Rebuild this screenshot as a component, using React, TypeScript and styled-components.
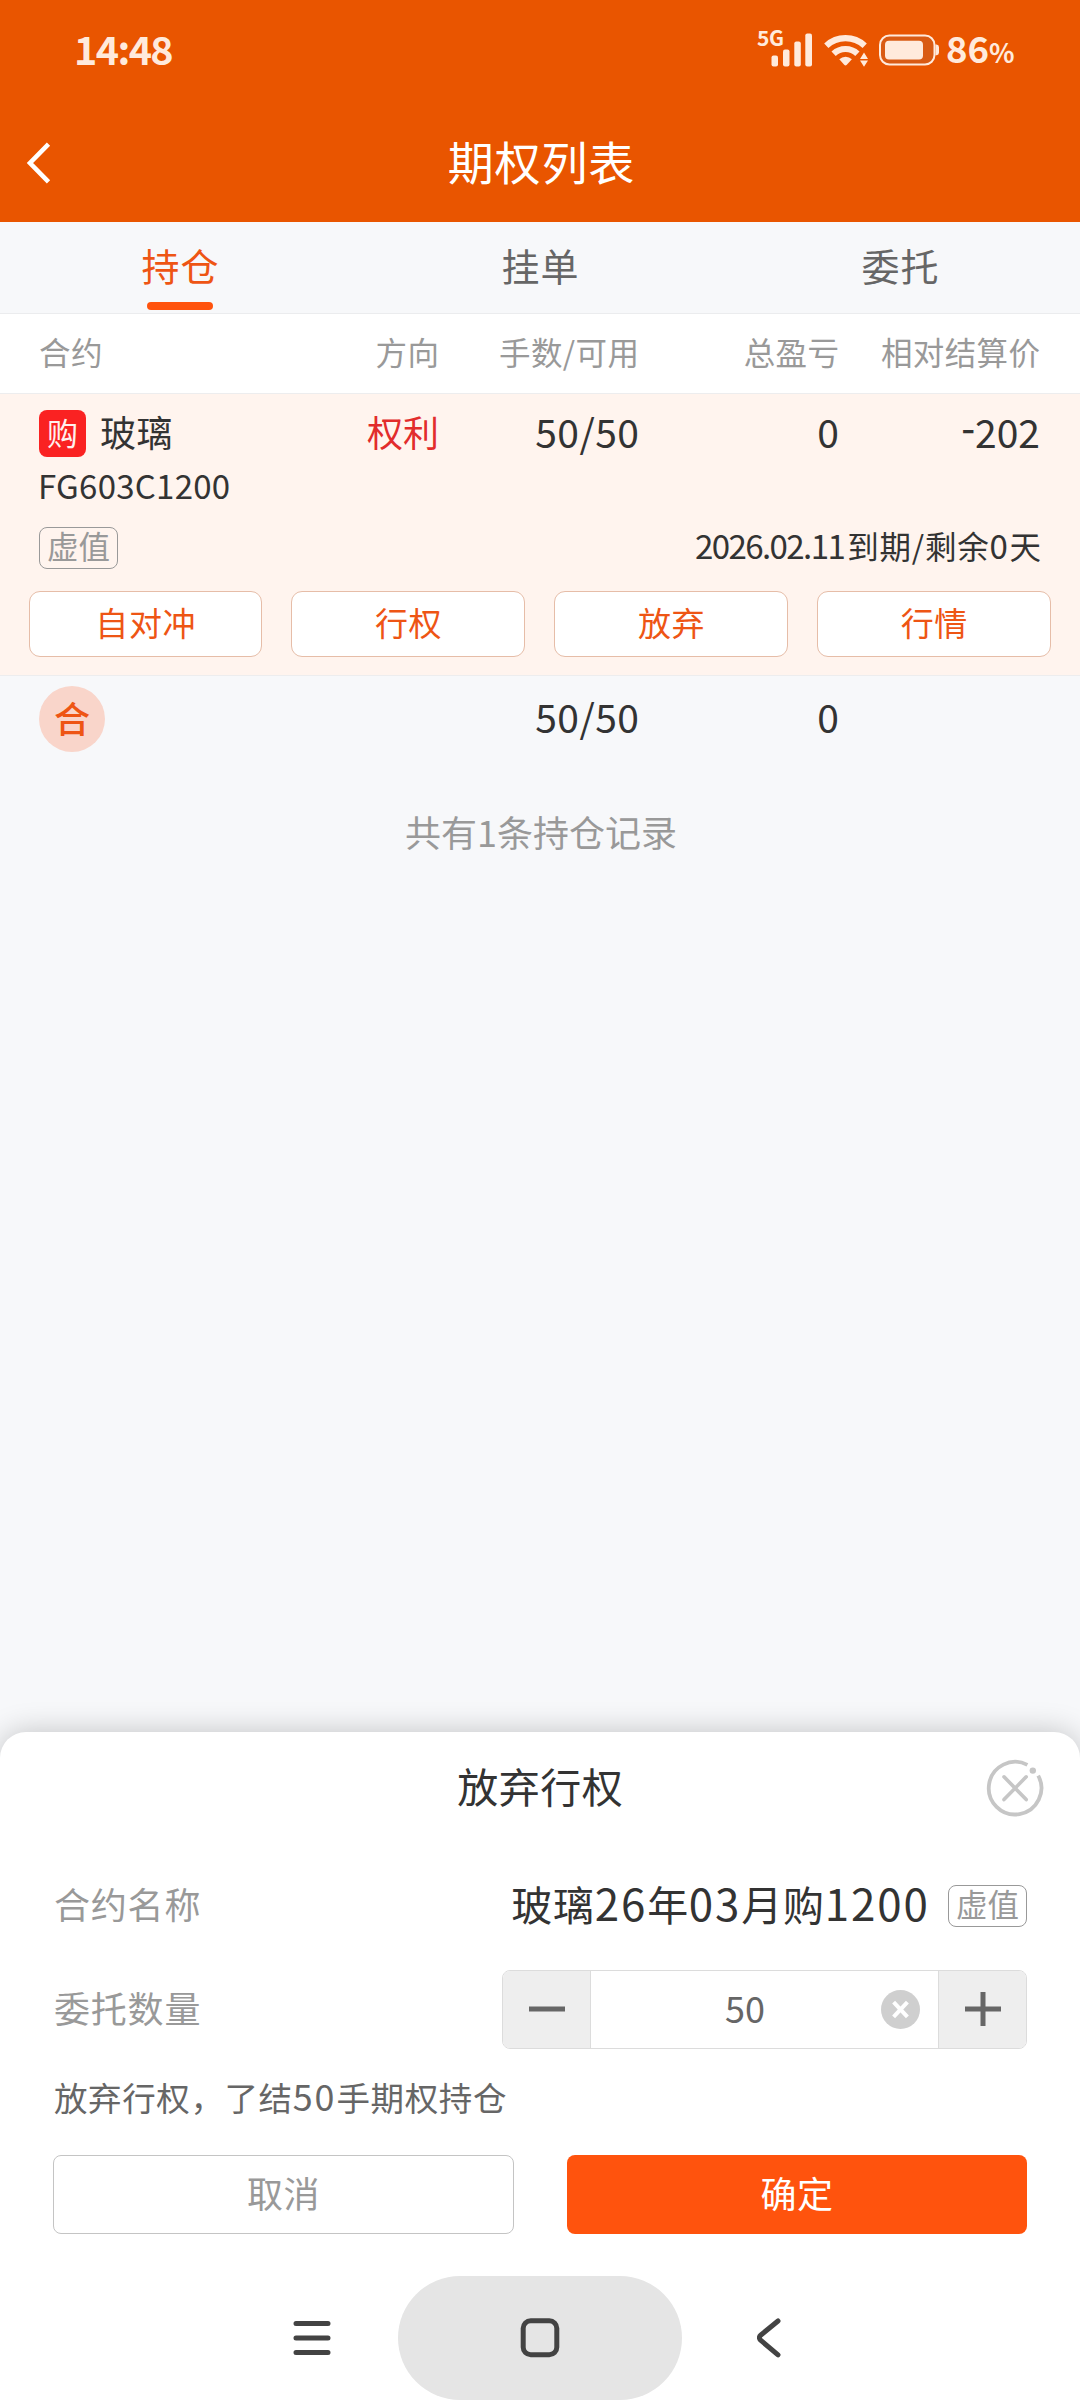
import React from "react";
import styled, { createGlobalStyle, css } from "styled-components";

const ORANGE = "#ff530d";
const ORANGE_TEXT = "#ee5514";
const STATUS = "#ffeadc";

const Global = createGlobalStyle`
  * { box-sizing: border-box; }
  html, body { margin: 0; padding: 0; }
  body {
    width: 1080px;
    background: #f7f8fa;
    font-family: "Noto Sans CJK SC", "Noto Sans", sans-serif;
  }
  button { font-family: inherit; padding: 0; margin: 0; border: 0; background: none; }
`;

const Screen = styled.div`
  width: 1080px;
  height: 2400px;
  display: flex;
  flex-direction: column;
  background: #f7f8fa;
  color: #333;
  overflow: hidden;
`;

/* Text with its line box trimmed to the em size; glyphs sit slightly low in this
   font, so the padding lifts them back to the optical middle. */
const Text = styled.span<{ $size: number; $color?: string; $weight?: number; $ls?: number }>`
  display: block;
  white-space: nowrap;
  font-size: ${(p) => p.$size}px;
  line-height: 1;
  padding-bottom: 0.12em;
  color: ${(p) => p.$color ?? "#333"};
  font-weight: ${(p) => p.$weight ?? 400};
  letter-spacing: ${(p) => p.$ls ?? 0}px;
  margin-right: ${(p) => -(p.$ls ?? 0)}px;
`;

const Num = styled.span<{ $scale?: number; $ls?: number }>`
  font-size: ${(p) => p.$scale ?? 1}em;
  line-height: 0;
  letter-spacing: ${(p) => p.$ls ?? 0}px;
`;

const Minus = styled.span`
  line-height: 0;
  vertical-align: 5px;
  font-weight: 500;
`;

const ExpiryDate = styled(Num)`
  margin-right: 3px;
`;

const Header = styled.header`
  height: 222px;
  flex: none;
  background: #e95500;
`;

const StatusBar = styled.div`
  height: 101px;
  padding: 0 67px 0 74px;
  display: flex;
  align-items: center;
  justify-content: space-between;
`;

const StatusRight = styled.div`
  width: 256px;
  display: flex;
  align-items: center;
`;

const StatusIcons = styled.svg`
  display: block;
  flex: none;
  margin-right: 7px;
  overflow: visible;
`;

const Battery = styled.div`
  display: flex;
  align-items: baseline;
`;

const TitleBar = styled.div`
  height: 121px;
  padding: 2px 25px 0 27px;
  display: grid;
  grid-template-columns: 100px 1fr 100px;
  align-items: center;
  justify-items: center;
`;

const BackIcon = styled.svg`
  justify-self: start;
  margin-left: -2px;
`;

const Tabs = styled.nav`
  height: 92px;
  flex: none;
  display: grid;
  grid-template-columns: repeat(3, 1fr);
  border-bottom: 1px solid #ebecee;
`;

const Tab = styled.div`
  display: flex;
  flex-direction: column;
  align-items: center;
  padding-top: 23.5px;
  gap: 13.9px;
`;

const TabBar = styled.i`
  width: 66px;
  height: 8px;
  border-radius: 4px;
  background: ${ORANGE};
`;

const columns = css`
  display: grid;
  grid-template-columns: 186px 214px 200px 200px 201px;
  padding: 0 40px 0 39px;
  align-items: center;
  justify-items: end;
  & > :first-child { justify-self: start; }
`;

const TableHead = styled.div`
  ${columns}
  height: 80px;
  flex: none;
  background: #fff;
  border-bottom: 1px solid #ededee;
`;

const Position = styled.section`
  flex: none;
  height: 282px;
  background: #fff4ee;
  border-bottom: 1px solid #ededee;
`;

const PositionRow = styled.div`
  ${columns}
  height: 79px;
`;

const Instrument = styled.div`
  display: flex;
  align-items: center;
  gap: 14px;
`;

const CallBadge = styled.div`
  width: 47px;
  height: 47px;
  border-radius: 8px;
  background: #fa2222;
  display: grid;
  place-items: center;
`;

const CodeLine = styled.div`
  height: 29px;
  padding-left: 38px;
  display: flex;
  align-items: center;
`;

const ExpiryLine = styled.div`
  height: 89px;
  padding: 3px 39px 0 39px;
  display: flex;
  align-items: center;
  justify-content: space-between;
`;

const Tag = styled.div`
  width: 79px;
  height: 42px;
  flex: none;
  border: 1px solid #999;
  border-radius: 8px;
  display: grid;
  place-items: center;
`;

const Actions = styled.div`
  display: grid;
  grid-template-columns: repeat(4, 1fr);
  gap: 29px;
  padding: 0 29px 0 28.5px;
`;

const ActionButton = styled.button`
  height: 66px;
  border: 1px solid #e6bda8;
  border-radius: 11px;
  background: #fff;
  display: grid;
  place-items: center;
`;

const TotalRow = styled.div`
  ${columns}
  height: 86px;
  flex: none;
`;

const SumBadge = styled.div`
  width: 66px;
  height: 66px;
  border-radius: 50%;
  background: #f9d5ca;
  display: grid;
  place-items: center;
`;

const Count = styled.div`
  flex: 1;
  padding: 51px 0 0 2px;
  display: flex;
  justify-content: center;
  align-items: flex-start;
`;

const Sheet = styled.section`
  flex: none;
  height: 544px;
  background: #fff;
  border-radius: 26px 26px 0 0;
  box-shadow: 0 0 30px rgba(0, 0, 0, 0.22);
  padding: 0 53px;
`;

const SheetHead = styled.div`
  height: 112px;
  margin: 0 -18px;
  display: grid;
  grid-template-columns: 60px 1fr 60px;
  align-items: center;
  justify-items: center;
`;

const Field = styled.div<{ $h: number }>`
  height: ${(p) => p.$h}px;
  padding-left: 1px;
  display: flex;
  align-items: center;
  justify-content: space-between;
`;

const ContractName = styled.div`
  display: flex;
  align-items: center;
  gap: 19px;
`;

const Stepper = styled.div`
  width: 525px;
  height: 79px;
  border: 1px solid #dcdcdc;
  border-radius: 8px;
  overflow: hidden;
  display: grid;
  grid-template-columns: 87px 1fr 87px;
`;

const StepButton = styled.button`
  background: #eee;
  display: grid;
  place-items: center;
`;

const StepValue = styled.div`
  border-left: 1px solid #dcdcdc;
  border-right: 1px solid #dcdcdc;
  padding: 0 18px;
  display: grid;
  grid-template-columns: 1fr 39px;
  align-items: center;
  justify-items: center;
`;

const Note = styled.div`
  height: 76px;
  padding: 20px 0 0 1px;
  display: flex;
  align-items: center;
`;

const SheetActions = styled.div`
  padding-top: 28px;
  display: grid;
  grid-template-columns: 1fr 1fr;
  gap: 53px;
`;

const SheetButton = styled.button<{ $primary?: boolean }>`
  height: 79px;
  border-radius: 8px;
  border: ${(p) => (p.$primary ? "0" : "1px solid #c4c4c4")};
  background: ${(p) => (p.$primary ? ORANGE : "#fff")};
  display: grid;
  place-items: center;
`;

const SystemNav = styled.nav`
  flex: none;
  height: 124px;
  background: #fff;
  display: flex;
  align-items: center;
  justify-content: center;
`;

const NavSlot = styled.div<{ $align: "start" | "end" }>`
  width: 172px;
  padding: 0 66px 0 75px;
  display: flex;
  justify-content: ${(p) => (p.$align === "start" ? "flex-start" : "flex-end")};
`;

const HomePill = styled.div`
  width: 284px;
  height: 124px;
  border-radius: 62px;
  background: #e5e5e5;
  display: grid;
  place-items: center;
`;

const NavIcon = styled.svg`
  display: block;
  flex: none;
  fill: none;
  stroke: #434343;
  stroke-width: 5;
  stroke-linecap: round;
  stroke-linejoin: round;
`;

const headings = ["合约", "方向", "手数/可用", "总盈亏", "相对结算价"];
const actions = ["自对冲", "行权", "放弃", "行情"];

function SignalIcons() {
  return (
    <StatusIcons width="182" height="60" viewBox="757 20.5 182 60" fill={STATUS}>
      <text x="757" y="45.7" fontSize="21" fontWeight="700" letterSpacing="-0.3">5G</text>
      <rect x="771.5" y="55" width="6.5" height="11" rx="2" />
      <rect x="783" y="49" width="6.5" height="17" rx="2" />
      <rect x="794.3" y="41" width="6.5" height="25" rx="2" />
      <rect x="805.3" y="33" width="6.7" height="33" rx="2" />
      <g fill="none" stroke={STATUS} strokeWidth="6.2">
        <path d="M826.3 45.2a28.3 28.3 0 0 1 38.4 0" />
        <path d="M833.6 53.2a17.4 17.4 0 0 1 23.8 0" />
      </g>
      <path d="M839.3 58.8a9 9 0 0 1 12.6 0l-5.1 5.4a1.8 1.8 0 0 1-2.6 0z" />
      <path d="M864 52l4 6.4h-8zM864 66.3l4-6.4h-8z" />
      <rect x="880" y="35" width="54.5" height="29" rx="9.5" fill="#d95b14" stroke={STATUS} strokeWidth="2" />
      <rect x="885" y="40.3" width="38" height="18.8" rx="4" />
      <path d="M935.5 44h1a2.7 2.7 0 0 1 2.5 2.7v5.3a2.7 2.7 0 0 1-2.5 2.7h-1z" />
    </StatusIcons>
  );
}

export default function App() {
  return (
    <>
      <Global />
      <Screen>
        <Header>
          <StatusBar>
            <Text $size={39.5} $color={STATUS} $weight={600} $ls={-1.6}>14:48</Text>
            <StatusRight>
              <SignalIcons />
              <Battery>
                <Text $size={36.5} $color={STATUS} $weight={600}>86</Text>
                <Text $size={26.5} $color={STATUS} $weight={600}>%</Text>
              </Battery>
            </StatusRight>
          </StatusBar>
          <TitleBar>
            <BackIcon width="28" height="42" viewBox="0 0 28 42" fill="none" stroke="#fff" strokeWidth="4.6">
              <path d="M23.5 2.2L5 21l18.5 18.8" />
            </BackIcon>
            <Text $size={46} $color="#fff" $ls={0.8}>期权列表</Text>
          </TitleBar>
        </Header>

        <Tabs>
          <Tab>
            <Text $size={38} $color={ORANGE_TEXT} $ls={1}>持仓</Text>
            <TabBar />
          </Tab>
          <Tab>
            <Text $size={38} $color="#666" $ls={1}>挂单</Text>
          </Tab>
          <Tab>
            <Text $size={38} $color="#666" $ls={1}>委托</Text>
          </Tab>
        </Tabs>

        <TableHead>
          {headings.map((h) => (
            <Text key={h} $size={31.5} $color="#999" $ls={0.4}>{h}</Text>
          ))}
        </TableHead>

        <Position>
          <PositionRow>
            <Instrument>
              <CallBadge>
                <Text $size={31} $color="#fff0ee">购</Text>
              </CallBadge>
              <Text $size={36} $ls={0.4}>玻璃</Text>
            </Instrument>
            <Text $size={36} $color="#e22c2c">权利</Text>
            <Text $size={39} $ls={0.5}>50/50</Text>
            <Text $size={39}>0</Text>
            <Text $size={39}><Minus>-</Minus>202</Text>
          </PositionRow>
          <CodeLine>
            <Text $size={33} $ls={0.25}>FG603C1200</Text>
          </CodeLine>
          <ExpiryLine>
            <Tag>
              <Text $size={31.5} $color="#999">虚值</Text>
            </Tag>
            <Text $size={31.5} $ls={0.8}>
              <ExpiryDate $scale={1.05} $ls={-1.6}>2026.02.11</ExpiryDate>到期/剩余<Num $scale={1.05} $ls={1.6}>0</Num>天
            </Text>
          </ExpiryLine>
          <Actions>
            {actions.map((a) => (
              <ActionButton key={a}>
                <Text $size={33} $color={ORANGE_TEXT} $ls={0.6}>{a}</Text>
              </ActionButton>
            ))}
          </Actions>
        </Position>

        <TotalRow>
          <SumBadge>
            <Text $size={36} $color={ORANGE_TEXT} $weight={500}>合</Text>
          </SumBadge>
          <span />
          <Text $size={39} $ls={0.5}>50/50</Text>
          <Text $size={39}>0</Text>
        </TotalRow>

        <Count>
          <Text $size={36} $color="#999">共有1条持仓记录</Text>
        </Count>

        <Sheet>
          <SheetHead>
            <span />
            <Text $size={41} $ls={0.5}>放弃行权</Text>
            <svg width="58" height="58" viewBox="0 0 58 58" fill="none" stroke="#c6c6c6" strokeWidth="3.8">
              <path d="M41.4 5.9A26.3 26.3 0 1 0 52.2 16.6" />
              <path d="M18 17.8l22.2 22.8M40.2 17.8L18 40.6" strokeLinecap="round" strokeWidth="3.6" />
              <circle cx="46.8" cy="11.6" r="3.2" fill="#c6c6c6" stroke="none" />
            </svg>
          </SheetHead>
          <Field $h={123}>
            <Text $size={36} $color="#999" $ls={0.8}>合约名称</Text>
            <ContractName>
              <Text $size={41} $ls={0.7}>
                玻璃<Num $scale={1.07} $ls={1.9}>26</Num>年<Num $scale={1.07} $ls={1.9}>03</Num>月购<Num $scale={1.07} $ls={1.9}>1200</Num>
              </Text>
              <Tag>
                <Text $size={31.5} $color="#999">虚值</Text>
              </Tag>
            </ContractName>
          </Field>
          <Field $h={84}>
            <Text $size={36} $color="#999" $ls={0.8}>委托数量</Text>
            <Stepper>
              <StepButton>
                <svg width="36" height="36" stroke="#666" strokeWidth="5">
                  <path d="M0 18h36" />
                </svg>
              </StepButton>
              <StepValue>
                <Text $size={36} $color="#666">50</Text>
                <svg width="39" height="39" viewBox="0 0 39 39">
                  <circle cx="19.5" cy="19.5" r="19.5" fill="#cfcfcf" />
                  <path d="M12.6 12.2l13.8 14.6M26.4 12.2L12.6 26.8" stroke="#fff" strokeWidth="4" />
                </svg>
              </StepValue>
              <StepButton>
                <svg width="36" height="36" stroke="#666" strokeWidth="5">
                  <path d="M0 18h36M18 1v34" />
                </svg>
              </StepButton>
            </Stepper>
          </Field>
          <Note>
            <Text $size={33.5} $color="#666" $ls={0.6}>
              放弃行权，了结<Num $scale={1.07} $ls={2}>50</Num>手期权持仓
            </Text>
          </Note>
          <SheetActions>
            <SheetButton>
              <Text $size={36} $color="#999" $ls={0.4}>取消</Text>
            </SheetButton>
            <SheetButton $primary>
              <Text $size={36} $color="#fff" $ls={0.4}>确定</Text>
            </SheetButton>
          </SheetActions>
        </Sheet>

        <SystemNav>
          <NavSlot $align="end">
            <NavIcon width="40" height="40" viewBox="0 0 40 40">
              <path d="M4 5.5h32M4 20h32M4 34.5h32" />
            </NavIcon>
          </NavSlot>
          <HomePill>
            <NavIcon width="40" height="40" viewBox="0 0 40 40">
              <rect x="3.2" y="2.8" width="33.6" height="34" rx="7.5" />
            </NavIcon>
          </HomePill>
          <NavSlot $align="start">
            <NavIcon width="26" height="40" viewBox="0 0 26 40">
              <path d="M21 3L3.6 17.2a3.2 3.2 0 0 0 0 5L21 36.8" />
            </NavIcon>
          </NavSlot>
        </SystemNav>
      </Screen>
    </>
  );
}
